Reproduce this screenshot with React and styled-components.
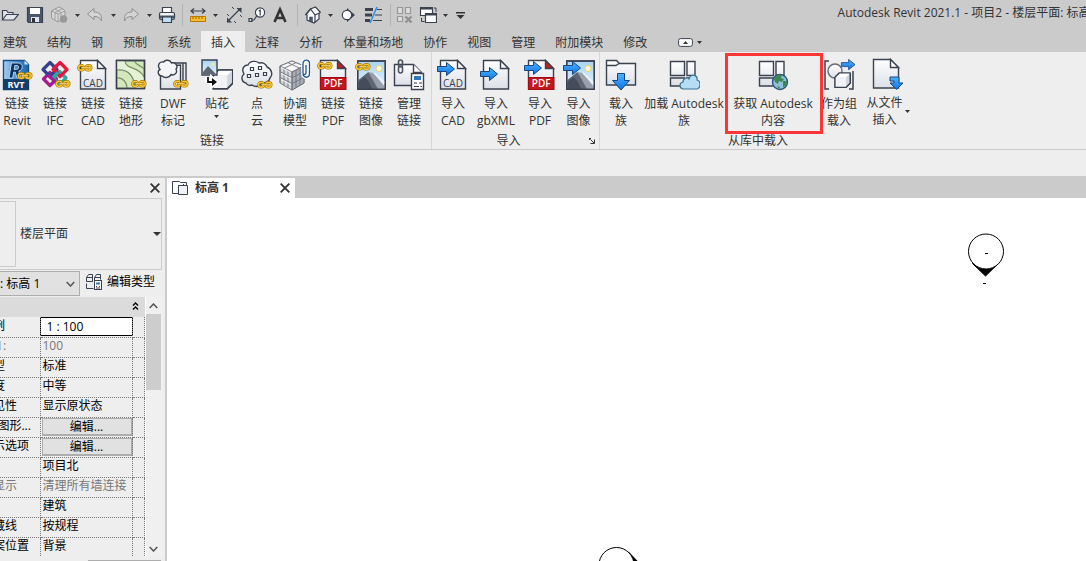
import React, { useState } from 'react';
import styled, { createGlobalStyle, css } from 'styled-components';

const GlobalStyle = createGlobalStyle`
  * {
    box-sizing: border-box;
  }
  body {
    margin: 0;
    overflow: hidden;
    background: #eee;
    color: #333;
    font-family: 'Open Sans', 'Noto Sans CJK SC', sans-serif;
    font-size: 12px;
    line-height: 16px;
  }
  button, input, select {
    font: inherit;
    color: inherit;
    margin: 0;
    padding: 0;
    border: 0;
    background: none;
  }
  svg {
    display: block;
    flex: none;
  }
`;

const StyledWrapper = styled.div`
  display: flex;
  flex-direction: column;
  height: 100vh;
  overflow: hidden;
`;
const TitleBar = styled.header`
  display: flex;
  align-items: center;
  height: 31px;
  background: #cbcbcb;
`;
const QuickAccess = styled.div`
  display: flex;
  align-items: center;
  flex: none;
  height: 31px;
  padding-bottom: 1px;
`;
const QuickButton = styled.button`
  display: flex;
  align-items: center;
  justify-content: center;
  width: ${(props) => props.$width}px;
  height: 20px;
  opacity: ${(props) => (props.disabled ? 0.5 : 1)};
`;
const QuickSeparator = styled.span`
  width: 1px;
  height: 22px;
  margin: 0 ${(props) => props.$space}px;
  background: #b3b3b3;
`;
const WindowTitle = styled.h1`
  flex: 1;
  margin: 0;
  padding: 0 0 6px;
  overflow: hidden;
  font-size: 12px;
  font-weight: 400;
  line-height: 18px;
  white-space: nowrap;
  text-align: left;
  text-indent: calc(77% - 107px);
`;
const TabBar = styled.nav`
  display: flex;
  align-items: center;
  height: 21px;
  margin-left: -7px;
  background: #cbcbcb;
`;
const RibbonTab = styled.button`
  height: 21px;
  padding: 2px 10px 0;
  white-space: nowrap;
  background: ${(props) => (props.$active ? '#eee' : 'transparent')};
`;
const RibbonToggle = styled.button`
  display: flex;
  align-items: center;
  gap: 4px;
  margin-left: 21px;
  padding-top: 2px;
`;
const Ribbon = styled.div`
  display: flex;
  height: 98px;
  background: #eee;
  border-bottom: 1px solid #cbcbcb;
`;
const RibbonPanel = styled.section`
  display: flex;
  flex-direction: column;
  justify-content: space-between;
  margin-left: ${(props) => (props.$cut ? '-2px' : '0')};
  padding: 0 2px;
  ${(props) =>
    !props.$cut &&
    css`
      border-left: 1px solid #d6d6d6;
    `}
  &:first-child {
    padding: 0 3px 0 0;
  }
  &:last-child {
    padding: 0;
  }
`;
const PanelTools = styled.div`
  display: flex;
`;
const PanelName = styled.div`
  display: flex;
  justify-content: center;
  align-items: center;
  height: 17px;
  padding-right: 2px;

  span {
    flex: 1;
    text-align: center;
    padding-right: ${(props) => (props.$launcher ? '6px' : '0')};
  }
`;
const ToolButton = styled.button`
  position: relative;
  display: flex;
  flex-direction: column;
  align-items: center;
  gap: 4px;
  width: ${(props) => props.$width || 38}px;
  padding-top: ${(props) => (props.$raised ? '6px' : '7px')};
  white-space: nowrap;
`;
const ToolLabel = styled.span`
  display: flex;
  flex-direction: column;
  align-items: center;
  line-height: 17px;

  svg {
    margin-top: 3px;
  }
`;
const SplitTool = styled.div`
  display: flex;
  align-items: center;
  gap: 2px;
`;
const Highlight = styled.span`
  position: absolute;
  z-index: 1;
  top: 1px;
  left: -1px;
  right: -3px;
  height: 81px;
  border: 3px solid #fb3636;
`;
const OptionsBar = styled.div`
  height: 28px;
  background: #eee;
  border-bottom: 2px solid #cbcbcb;
`;
const Workspace = styled.div`
  display: flex;
  flex: 1;
  min-height: 0;
`;
const Palette = styled.aside`
  display: flex;
  flex-direction: column;
  flex: none;
  width: 223px;
  margin-left: -56px;
  padding-right: 2px;
  color: #000;
  background: #eee;
  border-right: 2px solid #cbcbcb;
`;
const PaletteHead = styled.div`
  display: flex;
  justify-content: flex-end;
  align-items: center;
  height: 20px;
  padding-right: 3px;
`;
const TypeSelector = styled.button`
  display: flex;
  align-items: center;
  height: 72px;
  margin-right: 1px;
  text-align: left;
  color: #333;
  border: 1px solid #cbcbcb;

  span {
    flex: 1;
  }
`;
const TypePreview = styled.i`
  width: 71px;
  height: 66px;
  margin-right: 4px;
  border: 1px solid #cbcbcb;
`;
const FilterRow = styled.div`
  display: flex;
  height: 27px;
  padding-top: 1px;
`;
const SelectWrap = styled.label`
  display: flex;
  align-items: center;
  width: 136px;
  height: 25px;
  padding-right: 4px;
  background: #e1e1e1;
  border: 1px solid #adadad;
`;
const Select = styled.select`
  flex: 1;
  padding-left: 7px;
  appearance: none;
  outline: 0;
`;
const EditType = styled.button`
  display: flex;
  align-items: center;
  gap: 5px;
  height: 22px;
  padding-left: 6px;
`;
const PropertyArea = styled.div`
  display: flex;
  flex: 1;
  min-height: 0;
`;
const PropertyList = styled.div`
  flex: 1;
  overflow: hidden;
`;
const GroupHead = styled.button`
  display: flex;
  justify-content: flex-end;
  align-items: center;
  width: 100%;
  height: 20px;
  padding: 0 6px 2px 0;
  background: #dbdbdb;
`;
const PropertyTable = styled.table`
  width: 100%;
  table-layout: fixed;
  border-collapse: collapse;

  th, td {
    height: 20px;
    padding: 0 0 2px 2px;
    font-weight: 400;
    line-height: 16px;
    text-align: left;
    white-space: nowrap;
    border-right: 1px dotted #777;
    border-bottom: 1px dotted #777;
  }
  th {
    width: 96px;
    padding-left: 13px;
    overflow: hidden;
  }
  td:last-child {
    width: 12px;
  }
`;
const PropertyRow = styled.tr`
  color: ${(props) => (props.$dim ? '#777' : '#000')};
`;
const ScaleInput = styled.input`
  display: block;
  width: 93px;
  height: 19px;
  margin: 0 0 -2px -3px;
  padding-left: 6px;
  background: #fff;
  border: 1px solid #000;
  outline: 0;
`;
const EditButton = styled.button`
  display: block;
  width: 91px;
  height: 18px;
  margin: 0 0 -2px -1px;
  line-height: 14px;
  background: #e1e1e1;
  border: 1px solid #adadad;
  border-right-width: 2px;
  border-bottom-width: 2px;
`;
const ScrollTrack = styled.div`
  display: flex;
  flex-direction: column;
  align-items: center;
  flex: none;
  width: 18px;
  padding-right: 2px;
  background: #f0f0f0;
  border-left: 1px solid #fff;
`;
const ScrollArrow = styled.button`
  display: flex;
  align-items: center;
  justify-content: center;
  width: 15px;
  height: 17px;
`;
const ScrollThumb = styled.div`
  width: 15px;
  height: 76px;
  margin-bottom: auto;
  background: #cdcdcd;
`;
const PaletteFoot = styled.div`
  display: flex;
  justify-content: flex-end;
  height: 4px;
  padding: 3px 2px 0 0;

  i {
    width: 73px;
    background: #adadad;
  }
`;
const DocumentArea = styled.main`
  display: flex;
  flex-direction: column;
  flex: 1;
  min-width: 0;
`;
const DocumentTabs = styled.div`
  display: flex;
  height: 20px;
  background: #cbcbcb;
`;
const DocumentTab = styled.div`
  display: flex;
  align-items: center;
  gap: 7px;
  width: 128px;
  padding: 0 5px;
  font-weight: 700;
  background: #fff;

  span {
    flex: 1;
  }
`;
const IconButton = styled.button`
  display: flex;
`;
const Canvas = styled.div`
  position: relative;
  flex: 1;
  overflow: hidden;
  background: #fff;
`;
const Marker = styled.svg`
  position: absolute;
  left: ${(props) => props.$x}px;
  top: ${(props) => props.$y}px;
`;

const INK = '#3a4250';

/* shared pieces of the 32px ribbon icons */
const Big = ({ children }) => (
  <svg width="32" height="32" viewBox="0 0 32 32" fill="none" stroke={INK} strokeWidth="1.4">
    <defs>
      <linearGradient id="paper" x1="0" y1="0" x2="0" y2="1">
        <stop offset="0" stopColor="#fff" />
        <stop offset="1" stopColor="#dcdfe8" />
      </linearGradient>
      <linearGradient id="blue" x1="0" y1="0" x2="0" y2="1">
        <stop offset="0" stopColor="#4db4ff" />
        <stop offset="1" stopColor="#0e74e8" />
      </linearGradient>
      <linearGradient id="sky" x1="0" y1="0" x2="0" y2="1">
        <stop offset="0" stopColor="#a8d4f2" />
        <stop offset="1" stopColor="#e6f5fd" />
      </linearGradient>
      <linearGradient id="plate" x1="0" y1="0" x2="1" y2="0">
        <stop offset="0" stopColor="#a9d0f0" />
        <stop offset=".5" stopColor="#4d94d4" />
        <stop offset="1" stopColor="#1d63ab" />
      </linearGradient>
    </defs>
    {children}
  </svg>
);
const Chain = ({ x, y }) => (
  <g transform={`translate(${x} ${y})`}>
    <rect x="1.4" y="1.4" width="5.6" height="4.8" rx="2.4" stroke="#a87400" strokeWidth="2.6" />
    <rect x="8.6" y="1.4" width="5.6" height="4.8" rx="2.4" stroke="#a87400" strokeWidth="2.6" />
    <rect x="1.4" y="1.4" width="5.6" height="4.8" rx="2.4" stroke="#fccb2e" strokeWidth="1.4" />
    <rect x="8.6" y="1.4" width="5.6" height="4.8" rx="2.4" stroke="#fccb2e" strokeWidth="1.4" />
    <path d="M4 3.800h7.600" stroke="#a87400" strokeWidth="2.400" />
    <path d="M4.500 3.800h6.600" stroke="#ffe27a" strokeWidth="1.200" />
  </g>
);
const Arrow = ({ x, y }) => (
  <path
    transform={`translate(${x} ${y})`}
    d="M.5 4.5h9v-4l8 6.5-8 6.5v-4h-9z"
    fill="url(#blue)"
    stroke="#17457c"
    strokeWidth="1"
  />
);
const Page = ({ x = 3, fold = '#fff' }) => (
  <g transform={`translate(${x} 0)`}>
    <path d="M.5 1.500h17l8 8v20.500H.5z" fill="url(#paper)" />
    <path d="M17.500 1.500v8h8z" fill={fold} />
  </g>
);
const PageText = ({ x, children }) => (
  <text x={x} y="28" fontSize="10" textAnchor="middle" fill={INK} stroke="none">
    {children}
  </text>
);
const PdfPage = ({ x }) => (
  <g>
    <Page x={x} fold="#c91c1c" />
    <rect x={x + 0.5} y="18.5" width="25.4" height="12" fill="#c4161c" stroke="#a10d12" strokeWidth="1" />
    <text x={x + 13.2} y="28" fontSize="10" fontWeight="600" textAnchor="middle" fill="#fff" stroke="none">
      PDF
    </text>
  </g>
);
const Photo = ({ x = 2 }) => (
  <g transform={`translate(${x} 1)`}>
    <path d="M.7 1h27.600v28.300H.7z" fill="url(#sky)" />
    <circle cx="22" cy="8.500" r="3" fill="#fffbe0" stroke="#f5d060" strokeWidth="1" />
    <path d="M1.400 20l10-8 16.400 17H1.400z" fill="#5f6673" stroke="none" />
    <path d="M11.400 12l5 1 11.600 14v2h-7z" fill="#9aa0ab" stroke="none" />
    <path d="M1.400 22l6-5 4 4 4 8h-14z" fill="#454c5a" stroke="none" />
    <path d="M17 13l11 10" stroke="#f3f3f3" />
    <path d="M.7 1h27.600v28.300H.7z" />
  </g>
);
const Tiles = () => (
  <g fill="url(#paper)">
    <path d="M2.500 2.500h14v14h-14zM19 2.500h8v14h-8zM2.500 19h14v8h-14zM19 19h8v8h-8z" />
  </g>
);
const Cube = ({ x, y, s = 1 }) => (
  <g transform={`translate(${x} ${y}) scale(${s})`} strokeLinejoin="round">
    <path d="M0 5l5-5h13v12l-5 5H0z" fill="#d0d4dd" />
    <path d="M0 5h13v12H0z" fill="#f0f2f6" stroke="none" />
    <path d="M0 5l5-5h13l-5 5z" fill="#fff" stroke="none" />
    <path d="M0 5l5-5h13v12l-5 5H0z" />
  </g>
);

const icons = {
  revit: (
    <Big>
      <path d="M2.500 1.500h21l4 4v25h-25z" fill="url(#plate)" stroke="#174f8a" />
      <path d="M23.500 1.500v4h4z" fill="#cfe5f8" stroke="none" />
      <path d="M2 20h26v11H2z" fill="#143d6b" stroke="none" />
      <path
        d="M10.500 4H17c5.500 0 5.500 7 .8 8l2.200 7h-4l-1.800-6h-1.400L11.600 19H8zM13.800 6.500l-.7 4h2.400c2.600 0 3-4 .5-4z"
        fill="#0c315c"
        fillRule="evenodd"
        stroke="#e4f2fd"
        strokeWidth=".7"
      />
      <text x="15" y="29" fontSize="9" fontWeight="700" textAnchor="middle" fill="#fff" stroke="none">
        RVT
      </text>
      <Chain x={16} y={13} />
    </Big>
  ),
  ifc: (
    <Big>
      <g strokeWidth="3.200" strokeLinejoin="round">
        <path d="M11 13.500l6.500 6.500-6.500 6.500L4.500 20z" stroke="#a31b8c" />
        <path d="M20.500 12.500l6.500 6.500-6.500 6.500L14 19z" stroke="#2aa9a4" />
        <path d="M21 3.500l7 7-7 7-7-7z" stroke="#e4173f" />
        <path d="M11 3.500l7 7-7 7-7-7z" stroke="#34418f" />
        <path d="M18 6.500l-3.500 3.500 4 4" stroke="#e4173f" />
        <path d="M9 16l8 7.500" stroke="#a31b8c" />
        <path d="M14 18.500l5-5" stroke="#2aa9a4" />
      </g>
      <Chain x={16} y={21} />
    </Big>
  ),
  cad: (
    <Big>
      <Page />
      <PageText x={16}>CAD</PageText>
      <Chain x={0} y={5} />
    </Big>
  ),
  topo: (
    <Big>
      <path d="M1.500 1.500h28v28h-28z" fill="#d4e8bb" />
      <path d="M2 2h9c1 9 14 5 18 16v11H19C18 18 14 10 2 11z" fill="#e6f2d6" stroke="none" />
      <path d="M10 2c1 9 14 5 19 16M20 2c0 4 6 4 9 8M2 11c12-1 17 7 18 18M2 19c6-1 10 5 10 10" stroke="#79906a" strokeWidth="1.200" />
      <path d="M1.500 1.500h28v28h-28z" />
      <Chain x={16} y={21} />
    </Big>
  ),
  dwf: (
    <Big>
      <path d="M9 4h20v21M6 4h20v24" />
      <path d="M3.500 8v22h20V6z" fill="url(#paper)" />
      <path d="M5 17c-4 0-5-5-2-6.500C0 7 2 2 6.500 3c2-3 7-2 8 1 4-1 7 3 4.500 6 2 4-2 7-5 5.500-2 4-7 3.500-9 1.500z" fill="#f4f5f8" />
      <Chain x={16} y={21} />
    </Big>
  ),
  decal: (
    <Big>
      <Cube x={12} y={11} s={1.1} />
      <path d="M1 1h15v15H1z" fill="url(#sky)" />
      <path d="M2 13l5-6 8 8H2z" fill="#5f6673" stroke="none" />
      <circle cx="12" cy="5" r="1.500" fill="#ffe98a" stroke="none" />
      <path d="M6.500 18v5h7M11 19l5 4-5 4z" stroke="#fff" strokeWidth="4" />
      <path d="M7 18v5h6" stroke="#111" strokeWidth="1.800" />
      <path d="M11 19l5 4-5 4z" fill="#111" stroke="none" />
    </Big>
  ),
  points: (
    <Big>
      <path d="M5 24c-5-1-5-7-2-9-3-5 0-9 4-9 2-5 9-4 11-2 4-1 7 1 8 4 5 2 6 8 3 11-1 4-5 5-8 5-3 4-7 4-10 2-3 1-5 0-6-2z" fill="url(#paper)" />
      <path d="M9.500 8.500h3v3h-3zM17.500 7.500h3v3h-3zM6.500 15.500h3v3h-3zM14.500 14.500h3v3h-3zM22.500 13.500h3v3h-3z" fill="#fff" strokeWidth="1.200" />
      <Chain x={16} y={22} />
    </Big>
  ),
  model: (
    <Big>
      <g strokeWidth=".9" stroke="#6b7079">
        <path d="M13 2l12 5v17l-12 7L1 24V7z" fill="#d3d5da" />
        <path d="M13 2l12 5-12 6L1 7z" fill="#f6f6f8" />
        <path d="M13 13l12-6v17l-12 7z" fill="#a9adb5" />
        <path d="M9 3.700l12 5.600V26M17 3.700L5 9.300V26M1 12.700l12 6 12-6M1 18.500l12 6 12-6M13 13v18M1 7v17M9 11v17M17 11v17" stroke="#70757e" />
        <path d="M2 8.500l10 5M2 14.500l10 5M2 20.500l10 5" stroke="#fff" />
      </g>
      <path d="M27 6v8c0 2-3 2-3 0V4.500C24 0 30.500 0 30.500 4.500V14c0 6-6 5-6.500 1" stroke="#fff" strokeWidth="3.500" />
      <path d="M27 6v8c0 2-3 2-3 0V4.500C24 0 30.500 0 30.500 4.500V14c0 6-6 5-6.500 1" stroke="#1c5590" strokeWidth="1.300" />
    </Big>
  ),
  pdf: (
    <Big>
      <PdfPage x={3} />
      <Chain x={0} y={3} />
    </Big>
  ),
  image: (
    <Big>
      <Photo />
      <Chain x={0} y={4} />
    </Big>
  ),
  manage: (
    <Big>
      <path d="M1.500 5.500h19l8 8v13h-27z" fill="url(#paper)" />
      <path d="M20.500 5.500v8h8" fill="#fff" />
      <rect x="5.500" y="1" width="4" height="7" rx="2" stroke="#4d5563" strokeWidth="1.600" />
      <rect x="5.500" y="7" width="4" height="7" rx="2" stroke="#4d5563" strokeWidth="1.600" />
      <path d="M18.500 14.500h12v16h-12z" fill="#fff" />
      <path d="M21 17h7v4h-7z" fill="#2e74bd" stroke="none" />
      <path d="M21 24h3M26 24h3M21 27.500h5M27.500 27.500h1.500" strokeWidth="1.200" />
    </Big>
  ),
  importCad: (
    <Big>
      <Page />
      <PageText x={16}>CAD</PageText>
      <Arrow x={0} y={3} />
    </Big>
  ),
  importXml: (
    <Big>
      <Page />
      <Arrow x={0} y={8} />
    </Big>
  ),
  importPdf: (
    <Big>
      <PdfPage x={4} />
      <Arrow x={0} y={2} />
    </Big>
  ),
  importImage: (
    <Big>
      <Photo x={3} />
      <Arrow x={0} y={2} />
    </Big>
  ),
  loadFamily: (
    <Big>
      <path d="M1.500 26V1.500h10l3 3h16V26z" fill="url(#paper)" />
      <path d="M2 6.500h9l3-2" />
      <path d="M12.500 14.500h7v7h5L16 31l-8.500-9.500h5z" fill="url(#blue)" stroke="#17457c" strokeWidth="1" />
    </Big>
  ),
  loadCloud: (
    <Big>
      <Tiles />
      <path d="M15 30c-4-1-4-6 0-7 0-4 5-5 6-3 2-6 9-4 8 1 4 1 4 8 0 9z" fill="#b5def5" stroke="#3c7597" strokeWidth="1.200" />
    </Big>
  ),
  getContent: (
    <Big>
      <Tiles />
      <circle cx="23" cy="23" r="7.500" fill="#8fc0de" stroke="#2b5876" />
      <path d="M17 20c2-4 6-5 8-4l-1 3 3 1-2 3-3-1-1 3-3-2zM26 22h4l-1 5-3 1zM20 27l3 1-1 2z" fill="#3f8750" stroke="none" />
    </Big>
  ),
  loadGroup: (
    <Big>
      <path d="M6 2H2v28h4M26 30h4V12" strokeWidth="1.500" />
      <circle cx="12" cy="12" r="7" fill="url(#paper)" stroke="#646b78" />
      <Cube x={12} y={14} s={0.85} />
      <g transform="translate(18 0) scale(.8)">
        <Arrow x={0} y={0} />
      </g>
    </Big>
  ),
  fromFile: (
    <Big>
      <Page x={1} />
      <path d="M18 19h9v6h4l-6.500 6.500L18 25h4v-2h-4z" fill="url(#blue)" stroke="#17457c" strokeWidth="1" />
    </Big>
  ),
};

/* quick access icons, 18px grid */
const Small = ({ children }) => (
  <svg width="18" height="18" viewBox="0 0 18 18" fill="none" stroke={INK} strokeWidth="1.200">
    {children}
  </svg>
);
const Caret = ({ wide }) => (
  <svg width={wide ? 8 : 5} height={wide ? 4 : 3} viewBox="0 0 8 4" preserveAspectRatio="none">
    <path d="M0 0h8L4 4z" fill="#333" />
  </svg>
);
const Cross = () => (
  <svg width="10" height="10" viewBox="0 0 10 10" stroke="#333" strokeWidth="1.800">
    <path d="M.7.7l8.600 8.600M9.300.7L.7 9.300" />
  </svg>
);
const Chevron = ({ up }) => (
  <svg width="9" height="6" viewBox="0 0 9 6" fill="none" stroke="#555" strokeWidth="1.500">
    <path d={up ? 'M.7 5l3.800-4 3.800 4' : 'M.7 1l3.800 4 3.800-4'} />
  </svg>
);

const quickItems = [
  { name: '打开', width: 20, icon: <Small><path d="M1.500 14V4.500h4l1.500 2h5V9M1.500 14l4-5.500h12L13 14z" fill="#e3e6ec" /></Small> },
  { name: '保存', width: 30, icon: <Small><path d="M1.500 1.500h15v15h-14l-1-1z" fill="#4b586b" /><path d="M4 2h10v6H4z" fill="#fff" stroke="none" /><path d="M5 11h8v5H5z" fill="#dfe5ee" stroke="none" /><path d="M6 12h3v4H6z" fill="#333" stroke="none" /></Small> },
  { name: '同步', width: 18, disabled: true, icon: <Small><path d="M1.500 5l3.500-2 4-2 4 2 2 2v6l-7 5-6.500-4z" fill="#e4e4e4" stroke="#666" strokeWidth="1" /><path d="M1.500 5L8 8l7-3M8 8v8M5 3l6 3.500v7M12 3L5 6.500v7" stroke="#777" strokeWidth="1" /><circle cx="13.500" cy="13" r="3.800" fill="#666" stroke="none" /></Small> },
  { name: '同步选项', width: 18, caret: true },
  { name: '放弃', width: 18, disabled: true, icon: <Small><path d="M1.500 8L8 2.500V6c5 0 8 2 7.500 9-1-1-1-4.500-7.500-4.500v3z" fill="#ddd" stroke="#555" strokeWidth="1" /></Small> },
  { name: '放弃列表', width: 18, caret: true },
  { name: '重做', width: 18, disabled: true, icon: <Small><path d="M16.500 8L10 2.500V6c-5 0-8 2-7.500 9 1-1 1-4.500 7.500-4.500v3z" fill="#ddd" stroke="#555" strokeWidth="1" /></Small> },
  { name: '重做列表', width: 18, caret: true },
  { name: '打印', width: 18, icon: <Small><path d="M4.500 7V1.500h9V7" fill="#fff" /><rect x="1.500" y="6.500" width="15" height="7" rx="1.500" fill="#f2f3f5" /><path d="M2 9.500h14v3H2z" fill="#4b586b" stroke="none" /><path d="M4.500 11h9v5.500h-9z" fill="#bfe0f5" /></Small> },
  { separator: true, space: 6 },
  { name: '测量', width: 18, icon: <Small><path d="M2 5h14M5 2.500L2 5l3 2.500M13 2.500L16 5l-3 2.500" /><path d="M1.500 10.500h15v5h-15z" fill="#f8bd2c" stroke="#b87a00" strokeWidth="1" /><path d="M4 11v2M7 11v2M10 11v2M13 11v2" stroke="#7a5200" strokeWidth=".8" /></Small> },
  { name: '测量选项', width: 16, caret: true },
  { name: '对齐尺寸标注', width: 22, icon: <Small><path d="M2 16L16 2" /><path d="M2 11.500v5h5zM11.500 2h5v5z" fill={INK} stroke="none" /><path d="M2 8l2 2M9 15l2 2M7 1l2 2M15 9l2 2" strokeWidth="1" /></Small> },
  { name: '按类别标记', width: 24, icon: <Small><circle cx="12" cy="6.500" r="4.600" fill="#fff" /><path d="M3 14h3l3-4.500" /><path d="M1 12.500h3v3H1zM10.700 5l1.500-1v5.500" /></Small> },
  { name: '文字', width: 22, icon: <Small><path d="M3.500 16L9 3.500 14.500 16M5.500 12h7" strokeWidth="2.600" stroke="#333" /></Small> },
  { separator: true, space: 6 },
  { name: '默认三维视图', width: 18, icon: <Small><path d="M3 9v5l7 3 5-4V7l-4-4-4 2z" fill="#f4f6f9" /><path d="M1.500 9l5-6 5-2 5 5.500" fill="#fff" /><path d="M1.500 9l5-6 4.500 6v7.500M11 9l5.500-2.500" /><path d="M5.500 11h3v5l-3-1.300z" fill="#4b586b" strokeWidth=".5" /></Small> },
  { name: '三维视图选项', width: 16, caret: true },
  { name: '剖面', width: 20, icon: <Small><path d="M8 2l8 7-8 7z" fill={INK} stroke="none" /><circle cx="8" cy="9" r="4.700" fill="#fff" /></Small> },
  { name: '细线', width: 30, icon: <Small><path d="M1 3.500h8M1 9h7M1 14.500h5" strokeWidth="3" /><path d="M13 3.500h5M11 9h7M9 14.500h9" strokeWidth="1" /><path d="M13 1L6 17" stroke="#2f8eee" strokeWidth="1.600" /></Small> },
  { separator: true, space: 2 },
  { name: '关闭非活动视图', width: 22, disabled: true, icon: <Small><path d="M2.500 1.500h5v6h-5zM10.500 1.500h5v6h-5zM2.500 10.500h5v5h-5z" fill="#eee" stroke="#666" /><path d="M10.500 10.500l6 6M16.500 10.500l-6 6" stroke="#555" strokeWidth="2.200" /></Small> },
  { name: '切换窗口', width: 26, icon: <Small><path d="M1.500 1.500h12v8h-12z" fill="#fff" /><path d="M1.500 2.500h12" strokeWidth="2" /><path d="M6.500 7.500h11v9h-11z" fill="#fff" /><path d="M6.500 8.500h11" strokeWidth="2" /><path d="M15 2h2v4M2.500 12v3.500h3" strokeWidth="1" /></Small> },
  { name: '窗口列表', width: 8, caret: true },
  { name: '自定义快速访问工具栏', width: 22, icon: <svg width="9" height="7" viewBox="0 0 9 7"><path d="M0 0h9v1.500H0zM.5 3h8l-4 4z" fill="#333" /></svg> },
];

const tabs = ['建筑', '结构', '钢', '预制', '系统', '插入', '注释', '分析', '体量和场地', '协作', '视图', '管理', '附加模块', '修改'];

const panels = [
  {
    name: '链接',
    cut: true,
    tools: [
      { icon: 'revit', lines: ['链接', 'Revit'] },
      { icon: 'ifc', lines: ['链接', 'IFC'] },
      { icon: 'cad', lines: ['链接', 'CAD'] },
      { icon: 'topo', lines: ['链接', '地形'] },
      { icon: 'dwf', lines: ['DWF', '标记'], width: 46 },
      { icon: 'decal', lines: ['贴花'], width: 42, caret: true },
      { icon: 'points', lines: ['点', '云'] },
      { icon: 'model', lines: ['协调', '模型'] },
      { icon: 'pdf', lines: ['链接', 'PDF'] },
      { icon: 'image', lines: ['链接', '图像'] },
      { icon: 'manage', lines: ['管理', '链接'] },
    ],
  },
  {
    name: '导入',
    launcher: true,
    tools: [
      { icon: 'importCad', lines: ['导入', 'CAD'] },
      { icon: 'importXml', lines: ['导入', 'gbXML'], width: 48 },
      { icon: 'importPdf', lines: ['导入', 'PDF'], width: 40 },
      { icon: 'importImage', lines: ['导入', '图像'], width: 37 },
    ],
  },
  {
    name: '从库中载入',
    tools: [
      { icon: 'loadFamily', lines: ['载入', '族'], width: 42 },
      { icon: 'loadCloud', lines: ['加载 Autodesk', '族'], width: 84 },
      { icon: 'getContent', lines: ['获取 Autodesk', '内容'], width: 94, highlight: true },
      { icon: 'loadGroup', lines: ['作为组', '载入'] },
      { icon: 'fromFile', lines: ['从文件', '插入'], width: 60, raised: true },
    ],
  },
];

const properties = [
  { label: '视图比例', value: '1 : 100', type: 'input' },
  { label: '比例值 1:', value: '100', dim: true },
  { label: '显示模型', value: '标准' },
  { label: '详细程度', value: '中等' },
  { label: '零件可见性', value: '显示原状态' },
  { label: '可见性/图形...', value: '编辑...', type: 'button' },
  { label: '图形显示选项', value: '编辑...', type: 'button' },
  { label: '', value: '项目北' },
  { label: '墙连接显示', value: '清理所有墙连接', dim: true },
  { label: '', value: '建筑' },
  { label: '显示隐藏线', value: '按规程' },
  { label: '颜色方案位置', value: '背景' },
];

function Tool({ tool }) {
  return (
    <ToolButton $width={tool.width} $raised={tool.raised}>
      {icons[tool.icon]}
      <SplitTool>
        <ToolLabel>
          {tool.lines.map((line) => (
            <span key={line}>{line}</span>
          ))}
          {tool.caret && <Caret />}
        </ToolLabel>
        {tool.raised && <Caret />}
      </SplitTool>
      {tool.highlight && <Highlight />}
    </ToolButton>
  );
}

function PropertyValue({ item, onChange }) {
  switch (item.type) {
    case 'input':
      return <ScaleInput aria-label={item.label} value={item.value} onChange={onChange} />;
    case 'button':
      return <EditButton>{item.value}</EditButton>;
    default:
      return item.value;
  }
}

function App() {
  const [activeTab, setActiveTab] = useState('插入');
  const [scale, setScale] = useState('1 : 100');

  return (
    <StyledWrapper>
      <GlobalStyle />
      <TitleBar>
        <QuickAccess>
          {quickItems.map((item, i) =>
            item.separator ? (
              <QuickSeparator key={i} $space={item.space} />
            ) : (
              <QuickButton key={i} $width={item.width} disabled={item.disabled} aria-label={item.name}>
                {item.caret ? <Caret /> : item.icon}
              </QuickButton>
            )
          )}
        </QuickAccess>
        <WindowTitle>Autodesk Revit 2021.1 - 项目2 - 楼层平面: 标高 1</WindowTitle>
      </TitleBar>
      <TabBar>
        {tabs.map((tab) => (
          <RibbonTab key={tab} $active={tab === activeTab} onClick={() => setActiveTab(tab)}>
            {tab}
          </RibbonTab>
        ))}
        <RibbonToggle aria-label="最小化">
          <svg width="15" height="9" viewBox="0 0 15 9">
            <rect x=".6" y=".6" width="13.800" height="7.800" rx="2" fill="#fff" stroke={INK} />
            <path d="M5 6l2.500-3L10 6z" fill="#333" />
          </svg>
          <Caret />
        </RibbonToggle>
      </TabBar>
      <Ribbon>
        {panels.map((panel) => (
          <RibbonPanel key={panel.name} $cut={panel.cut}>
            <PanelTools>
              {panel.tools.map((tool) => (
                <Tool key={tool.icon} tool={tool} />
              ))}
            </PanelTools>
            <PanelName $launcher={panel.launcher}>
              <span>{panel.name}</span>
              {panel.launcher && (
                <IconButton aria-label="导入选项">
                  <svg width="6" height="6" viewBox="0 0 6 6" stroke="#333" fill="none">
                    <path d="M0 .5h2M.5 0v2M1.500 1.500L5 5M5.500 1.500v4h-4" />
                  </svg>
                </IconButton>
              )}
            </PanelName>
          </RibbonPanel>
        ))}
      </Ribbon>
      <OptionsBar />
      <Workspace>
        <Palette>
          <PaletteHead>
            <IconButton aria-label="关闭属性">
              <Cross />
            </IconButton>
          </PaletteHead>
          <TypeSelector>
            <TypePreview />
            <span>楼层平面</span>
            <Caret wide />
          </TypeSelector>
          <FilterRow>
            <SelectWrap>
              <Select aria-label="属性过滤器">
                <option>楼层平面: 标高 1</option>
              </Select>
              <Chevron />
            </SelectWrap>
            <EditType>
              <svg width="16" height="16" viewBox="0 0 16 16" fill="none" stroke={INK}>
                <path d="M.5 3.500l2-3h4v7h-6zM8.500 3.500l2-3h4v5M8.500 3.500v4M.5 9.500v5h7M.5 3.500h6M8.500 3.500h6" />
                <rect x="8.500" y="6.500" width="7" height="9" fill="#fff" />
                <path d="M10 8.500h4v2h-4z" fill="#2e74bd" stroke="none" />
                <path d="M10 12.500h1M13 12.500h1M10 14h4" />
              </svg>
              编辑类型
            </EditType>
          </FilterRow>
          <PropertyArea>
            <PropertyList>
              <GroupHead aria-label="图形">
                <svg width="7" height="8" viewBox="0 0 7 8" fill="none" stroke="#000" strokeWidth="1.300">
                  <path d="M1 3.500L3.500 1 6 3.500M1 7.500L3.500 5 6 7.500" />
                </svg>
              </GroupHead>
              <PropertyTable>
                <tbody>
                  {properties.map((item, i) => (
                    <PropertyRow key={i} $dim={item.dim}>
                      <th scope="row">{item.label}</th>
                      <td>
                        <PropertyValue
                          item={item.type === 'input' ? { ...item, value: scale } : item}
                          onChange={(e) => setScale(e.target.value)}
                        />
                      </td>
                      <td />
                    </PropertyRow>
                  ))}
                </tbody>
              </PropertyTable>
            </PropertyList>
            <ScrollTrack>
              <ScrollArrow aria-label="向上滚动">
                <Chevron up />
              </ScrollArrow>
              <ScrollThumb />
              <ScrollArrow aria-label="向下滚动">
                <Chevron />
              </ScrollArrow>
            </ScrollTrack>
          </PropertyArea>
          <PaletteFoot>
            <i />
          </PaletteFoot>
        </Palette>
        <DocumentArea>
          <DocumentTabs>
            <DocumentTab>
              <svg width="16" height="14" viewBox="0 0 16 14" fill="none" stroke={INK}>
                <path d="M6.500 12.500h-6V.5h7l1 1h6v3" fill="#fff" />
                <path d="M6.500 4.500h9v9h-9z" fill="#f1f2f5" />
                <path d="M6.500 4.500h9" strokeDasharray="2 1" />
                <path d="M11.500 1v3" strokeDasharray="1 1" />
              </svg>
              <span>标高 1</span>
              <IconButton aria-label="关闭视图">
                <Cross />
              </IconButton>
            </DocumentTab>
          </DocumentTabs>
          <Canvas>
            <Marker $x={800} $y={34} width="38" height="56" viewBox="0 0 38 56">
              <path d="M5.500 31.500L18.500 44l13-12.500z" stroke="#000" />
              <circle cx="19" cy="19.500" r="17.500" fill="#fff" stroke="#000" />
              <path d="M18 21.500h3M16 51.500h3" stroke="#000" />
            </Marker>
            <Marker $x={431} $y={348} width="46" height="38" viewBox="0 0 46 38">
              <path d="M30.500 6L43 19 30.500 32z" stroke="#000" />
              <circle cx="18.500" cy="19" r="17.500" fill="#fff" stroke="#000" />
            </Marker>
          </Canvas>
        </DocumentArea>
      </Workspace>
    </StyledWrapper>
  );
}

export default App;
